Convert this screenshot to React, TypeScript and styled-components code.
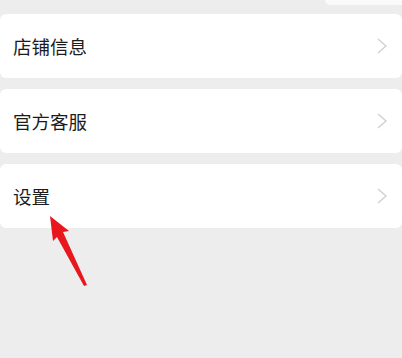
import React from 'react'
import styled, { createGlobalStyle } from 'styled-components'

const GlobalStyle = createGlobalStyle`
  html,
  body {
    margin: 0;
    padding: 0;
    background: #ededed;
  }
  body {
    font-family: 'Noto Sans CJK SC', 'Noto Sans', sans-serif;
  }
`

const Page = styled.div`
  position: relative;
  width: 402px;
  height: 358px;
  overflow: hidden;
  background: #ededed;
`

const TopCard = styled.div`
  height: 5px;
  margin-left: 325px;
  background: #fafafa;
  border-bottom-left-radius: 6px;
`

const List = styled.div`
  display: flex;
  flex-direction: column;
  gap: 11px;
  padding-top: 9px;
`

const Row = styled.div`
  display: flex;
  align-items: center;
  justify-content: space-between;
  height: 64px;
  padding: 0 14px 0 13px;
  background: #ffffff;
  border-radius: 6px;
`

const Label = styled.span`
  font-size: 18.5px;
  color: #1c1c1c;
  line-height: 1;
`

const ChevronIcon = styled.svg`
  width: 12px;
  height: 16px;
  flex-shrink: 0;
`

const Pointer = styled.svg`
  position: absolute;
  left: 0;
  top: 0;
  width: 402px;
  height: 358px;
  pointer-events: none;
`

const Chevron = () => (
  <ChevronIcon viewBox="0 0 12 16">
    <path d="M2 1 L10 8 L2 15" fill="none" stroke="#cfcfcf" strokeWidth="1.3" />
  </ChevronIcon>
)

const items = ['店铺信息', '官方客服', '设置']

const App = () => {
  return (
    <Page>
      <GlobalStyle />
      <TopCard />
      <List>
        {items.map((label) => (
          <Row key={label}>
            <Label>{label}</Label>
            <Chevron />
          </Row>
        ))}
      </List>
      <Pointer viewBox="0 0 402 358">
        <polygon
          points="50,216 69,231 63,232 87,285 84,286 57,237 53,241"
          fill="#e8161d"
        />
      </Pointer>
    </Page>
  )
}

export default App
